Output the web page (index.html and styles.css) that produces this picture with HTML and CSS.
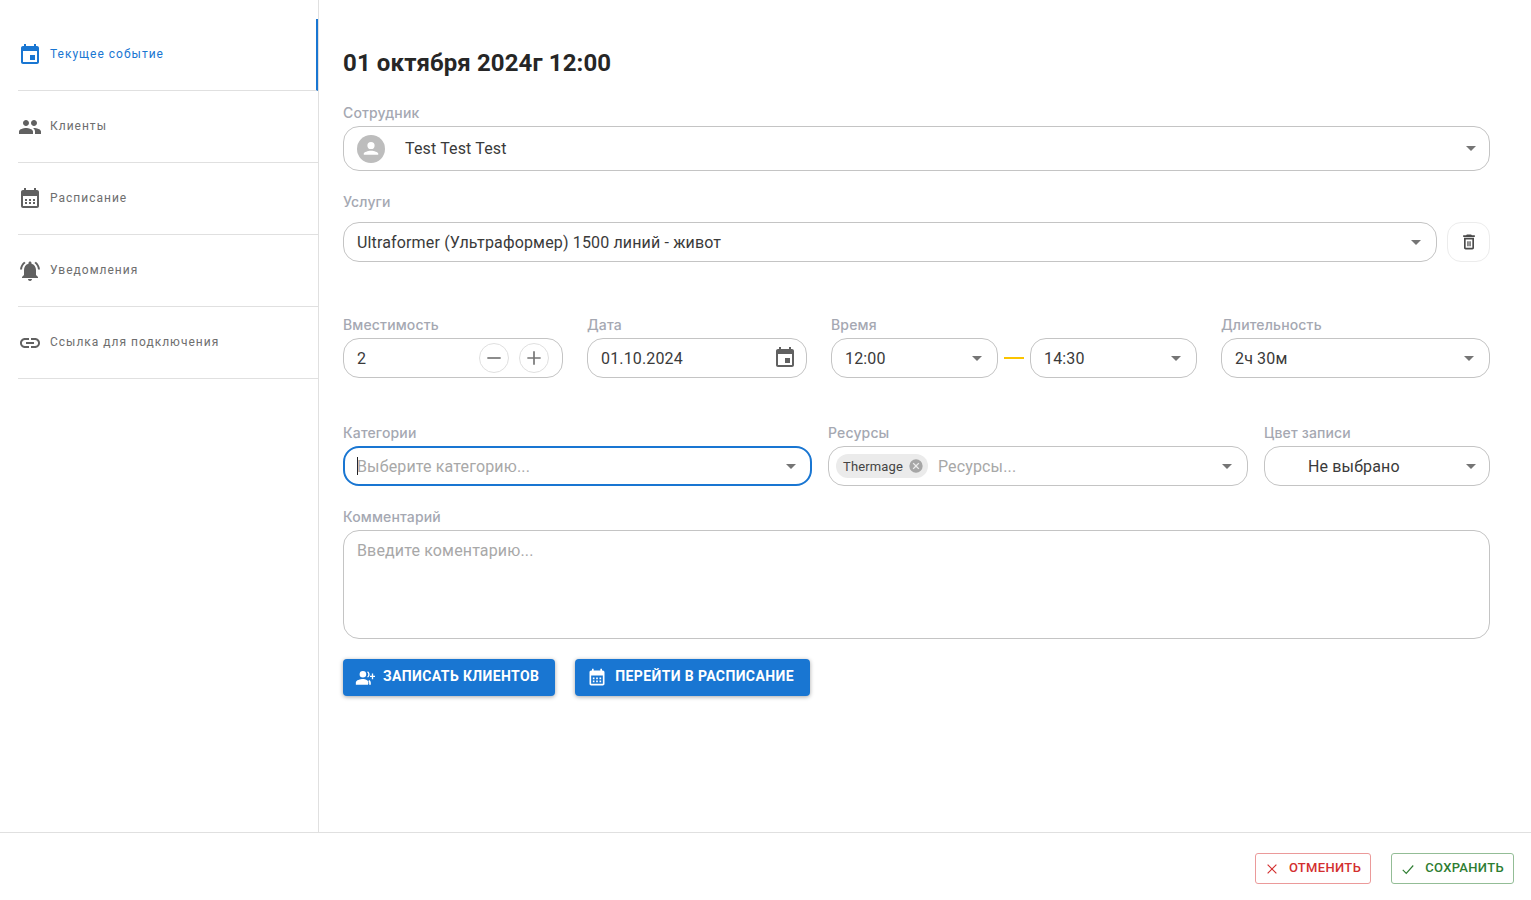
FILE: index.html
```html
<!DOCTYPE html>
<html lang="ru">
<head>
  <meta charset="UTF-8">
  <title>Событие</title>
  <link rel="stylesheet" href="styles.css">
</head>
<body>
  <div class="page">
    <div class="main">
      <nav class="sidebar">
        <a class="nav-item active">
          <svg class="nav-icon" viewBox="0 0 24 24"><path d="M17 12h-5v5h5v-5zM16 1v2H8V1H6v2H5c-1.11 0-1.99.9-1.99 2L3 19c0 1.1.89 2 2 2h14c1.1 0 2-.9 2-2V5c0-1.1-.9-2-2-2h-1V1h-2zm3 18H5V8h14v11z"/></svg>
          <span>Текущее событие</span>
        </a>
        <a class="nav-item">
          <svg class="nav-icon" viewBox="0 0 24 24"><path d="M16 11c1.66 0 2.99-1.34 2.99-3S17.66 5 16 5c-1.66 0-3 1.34-3 3s1.34 3 3 3zm-8 0c1.66 0 2.99-1.34 2.99-3S9.66 5 8 5C6.34 5 5 6.34 5 8s1.34 3 3 3zm0 2c-2.33 0-7 1.17-7 3.5V19h14v-2.5c0-2.33-4.67-3.5-7-3.5zm8 0c-.29 0-.62.02-.97.05 1.16.84 1.97 1.97 1.97 3.45V19h6v-2.5c0-2.33-4.67-3.5-7-3.5z"/></svg>
          <span>Клиенты</span>
        </a>
        <a class="nav-item">
          <svg class="nav-icon" viewBox="0 0 24 24"><path d="M19 3h-1V1h-2v2H8V1H6v2H5c-1.1 0-2 .9-2 2v14c0 1.1.9 2 2 2h14c1.1 0 2-.9 2-2V5c0-1.1-.9-2-2-2zm0 16H5V9h14v10zM7 12h2v2H7zm4 0h2v2h-2zm4 0h2v2h-2zm-8 3h2v2H7zm4 0h2v2h-2zm4 0h2v2h-2z"/></svg>
          <span>Расписание</span>
        </a>
        <a class="nav-item">
          <svg class="nav-icon" viewBox="0 0 24 24"><path d="M7.58 4.08 6.15 2.65C3.75 4.48 2.17 7.3 2.03 10.5h2c.15-2.65 1.51-4.97 3.55-6.42zm12.39 6.42h2c-.15-3.2-1.73-6.02-4.12-7.85l-1.42 1.43c2.02 1.45 3.39 3.77 3.54 6.42zM18 11c0-3.07-1.64-5.64-4.5-6.32V4c0-.83-.67-1.5-1.5-1.5s-1.5.67-1.5 1.5v.68C7.63 5.36 6 7.92 6 11v5l-2 2v1h16v-1l-2-2v-5zm-6 11c.14 0 .27-.01.4-.04.65-.14 1.18-.58 1.44-1.18.1-.24.15-.5.15-.78h-4c.01 1.1.9 2 2.01 2z"/></svg>
          <span>Уведомления</span>
        </a>
        <a class="nav-item">
          <svg class="nav-icon" viewBox="0 0 24 24"><path d="M3.9 12c0-1.71 1.39-3.1 3.1-3.1h4V7H7c-2.76 0-5 2.24-5 5s2.24 5 5 5h4v-1.9H7c-1.71 0-3.1-1.39-3.1-3.1zM8 13h8v-2H8v2zm9-6h-4v1.9h4c1.71 0 3.1 1.39 3.1 3.1s-1.39 3.1-3.1 3.1h-4V17h4c2.76 0 5-2.24 5-5s-2.24-5-5-5z"/></svg>
          <span>Ссылка для подключения</span>
        </a>
      </nav>

      <section class="content">
        <h1 class="title">01 октября 2024г 12:00</h1>

        <div class="field field-employee">
          <label class="label">Сотрудник</label>
          <div class="control control-tall">
            <span class="avatar">
              <svg viewBox="0 0 24 24"><path d="M12 5.9a3.1 3.1 0 1 1 0 6.2 3.1 3.1 0 0 1 0-6.2zM12 13.5c2.7 0 6 1.3 6.2 2.3v1.2H5.8v-1.2c.2-1 3.5-2.3 6.2-2.3z"/></svg>
            </span>
            <span class="value">Test Test Test</span>
            <i class="caret"></i>
          </div>
        </div>

        <div class="field field-services">
          <label class="label">Услуги</label>
          <div class="service-row">
            <div class="control">
              <span class="value">Ultraformer (Ультраформер) 1500 линий - живот</span>
              <i class="caret"></i>
            </div>
            <button class="trash">
              <svg viewBox="0 0 24 24"><path d="M6 19c0 1.1.9 2 2 2h8c1.1 0 2-.9 2-2V7H6v12zM8 9h8v10H8V9zm7.5-5-1-1h-5l-1 1H5v2h14V4h-3.5zM10 11h1.5v6H10zm2.5 0H14v6h-1.5z"/></svg>
            </button>
          </div>
        </div>

        <div class="row-main">
          <div class="field">
            <label class="label">Вместимость</label>
            <div class="control">
              <span class="value">2</span>
              <button class="round"><svg viewBox="0 0 24 24"><path d="M4 11h16v2H4z"/></svg></button>
              <button class="round"><svg viewBox="0 0 24 24"><path d="M11 4h2v7h7v2h-7v7h-2v-7H4v-2h7z"/></svg></button>
            </div>
          </div>
          <div class="field">
            <label class="label">Дата</label>
            <div class="control">
              <span class="value">01.10.2024</span>
              <svg class="date-icon" viewBox="0 0 24 24"><path d="M17 12h-5v5h5v-5zM16 1v2H8V1H6v2H5c-1.11 0-1.99.9-1.99 2L3 19c0 1.1.89 2 2 2h14c1.1 0 2-.9 2-2V5c0-1.1-.9-2-2-2h-1V1h-2zm3 18H5V8h14v11z"/></svg>
            </div>
          </div>
          <div class="field">
            <label class="label">Время</label>
            <div class="time-range">
              <div class="control">
                <span class="value">12:00</span>
                <i class="caret"></i>
              </div>
              <span class="dash"></span>
              <div class="control">
                <span class="value">14:30</span>
                <i class="caret"></i>
              </div>
            </div>
          </div>
          <div class="field">
            <label class="label">Длительность</label>
            <div class="control">
              <span class="value">2ч 30м</span>
              <i class="caret"></i>
            </div>
          </div>
        </div>

        <div class="row-extra">
          <div class="field">
            <label class="label">Категории</label>
            <div class="control focused">
              <span class="cursor"></span>
              <span class="value placeholder">Выберите категорию...</span>
              <i class="caret"></i>
            </div>
          </div>
          <div class="field">
            <label class="label">Ресурсы</label>
            <div class="control control-chips">
              <span class="chip">
                Thermage
                <svg viewBox="0 0 24 24"><path d="M12 2a10 10 0 1 0 0 20 10 10 0 0 0 0-20zm5 13.6L15.6 17 12 13.4 8.4 17 7 15.6l3.6-3.6L7 8.400 8.400 7l3.600 3.600L15.600 7 17 8.400 13.400 12z"/></svg>
              </span>
              <span class="value placeholder">Ресурсы...</span>
              <i class="caret"></i>
            </div>
          </div>
          <div class="field">
            <label class="label">Цвет записи</label>
            <div class="control control-color">
              <span class="value color-value">Не выбрано</span>
              <i class="caret"></i>
            </div>
          </div>
        </div>

        <div class="field field-comment">
          <label class="label">Комментарий</label>
          <div class="textarea">Введите коментарию...</div>
        </div>

        <div class="actions">
          <button class="btn">
            <svg viewBox="0 0 24 24"><path d="M9.500 11.500a4 4 0 1 0 0-8 4 4 0 0 0 0 8zM9.500 13.300c-3 0-8.500 1.400-8.500 4.200V20h14.500l.5-1v-1.500c0-2.800-3.500-4.200-6.500-4.200zM20.200 6.500h1.600v2.700h2.200v1.600h-2.200v2.700h-1.600v-2.700H18V9.200h2.200zM15.500 4c1.300 1.100 2 2.300 2 3.800s-.7 2.700-2 3.700l-.9-1.100c.9-.7 1.300-1.600 1.300-2.600s-.4-1.900-1.300-2.700zM17 14.500c1.300.8 2 2 2 3.500v2h-2v-2c0-.8-.4-1.500-1-2z"/></svg>
            <span class="btn-text">Записать клиентов</span>
          </button>
          <button class="btn">
            <svg viewBox="0 0 24 24"><path d="M19 3h-1V1h-2v2H8V1H6v2H5c-1.100 0-2 .9-2 2v14c0 1.100.9 2 2 2h14c1.100 0 2-.9 2-2V5c0-1.100-.9-2-2-2zm0 16H5V9h14v10zM7 11.500h2v2H7zm4 0h2v2h-2zm4 0h2v2h-2zm-8 3.500h2v2H7zm4 0h2v2h-2zm4 0h2v2h-2z"/></svg>
            <span class="btn-text">Перейти в расписание</span>
          </button>
        </div>
      </section>
    </div>

    <footer class="footer">
      <button class="foot-btn cancel">
        <svg viewBox="0 0 24 24"><path d="M4.500 4.500l15 15M19.500 4.500l-15 15"/></svg>
        Отменить
      </button>
      <button class="foot-btn save">
        <svg viewBox="0 0 24 24"><path d="M3 13.500l6 6L21 6"/></svg>
        Сохранить
      </button>
    </footer>
  </div>
</body>
</html>
```

FILE: styles.css
```css
* {
  box-sizing: border-box;
}

body {
  margin: 0;
  font-family: Roboto, "Liberation Sans", sans-serif;
  color: #333;
  background-color: #fff;
}

.page {
  height: 900px;
  display: flex;
  flex-direction: column;
  overflow: hidden;
}

.main {
  height: 832px;
  display: flex;
}

/* sidebar */
.sidebar {
  width: 319px;
  padding: 19px 0 0 18px;
  border-right: 1px solid #e0e0e0;
}

.nav-item {
  height: 72px;
  display: flex;
  align-items: center;
  gap: 8px;
  padding-bottom: 2px;
  border-bottom: 1px solid #e0e0e0;
  font-size: 12px;
  letter-spacing: 1px;
  color: #6e6e6e;
}

.nav-icon {
  width: 24px;
  height: 24px;
  margin-top: 2px;
  fill: #616161;
}

.nav-item.active {
  color: #1976d2;
  border-right: 2px solid #1976d2;
}

.nav-item.active .nav-icon {
  fill: #1976d2;
}

/* form */
.content {
  flex: 1;
  padding: 0 41px 0 24px;
}

.title {
  margin: 48px 0 0;
  font-size: 24px;
  line-height: 30px;
  font-weight: 700;
  letter-spacing: 0.12px;
  color: #262626;
}

.field {
  min-width: 0;
}

.label {
  display: block;
  height: 16px;
  margin-bottom: 5px;
  font-family: Inter, Roboto, sans-serif;
  font-size: 14px;
  line-height: 16px;
  font-weight: 500;
  letter-spacing: 0.15px;
  color: #a5a8b2;
}

.field-employee {
  margin-top: 27px;
}

.field-services {
  margin-top: 23px;
}

.field-services .label {
  margin-bottom: 12px;
}

.control {
  position: relative;
  flex: 1;
  height: 40px;
  display: flex;
  align-items: center;
  padding: 0 13px;
  border: 1px solid #c4c4c4;
  border-radius: 16px;
  background-color: #fff;
}

.control-tall {
  height: 45px;
}

.control-tall .caret,
.control-color .caret {
  margin-right: 0;
}

.value {
  flex: 1;
  font-size: 16px;
  letter-spacing: 0.15px;
  color: #3a3a3a;
  white-space: nowrap;
}

.value.placeholder {
  color: #a8a8a8;
}

.caret {
  width: 0;
  height: 0;
  margin-right: 2px;
  border-left: 5px solid transparent;
  border-right: 5px solid transparent;
  border-top: 5px solid #757575;
}

.avatar {
  width: 28px;
  height: 28px;
  margin-right: 20px;
  border-radius: 50%;
  background-color: #bdbdbd;
}

.avatar svg {
  display: block;
  width: 28px;
  height: 28px;
  fill: #fff;
}

.service-row {
  display: flex;
  gap: 10px;
}

.trash {
  width: 43px;
  height: 40px;
  padding: 0;
  display: flex;
  align-items: center;
  justify-content: center;
  border: 1px solid #ececec;
  border-radius: 14px;
  background-color: #fff;
}

.trash svg {
  width: 20px;
  height: 20px;
  fill: #4a4a4a;
}

.row-main {
  display: grid;
  grid-template-columns: 220px 220px 366px 1fr;
  gap: 24px;
  margin-top: 55px;
}

.round {
  width: 30px;
  height: 30px;
  margin-left: 10px;
  padding: 0;
  display: flex;
  align-items: center;
  justify-content: center;
  border: 1px solid #e0e0e0;
  border-radius: 50%;
  background-color: #fff;
}

.round svg {
  width: 20px;
  height: 20px;
  fill: #757575;
}

.date-icon {
  width: 24px;
  height: 24px;
  margin-right: -4px;
  fill: #616161;
}

.time-range {
  display: flex;
  align-items: center;
}

.dash {
  width: 20px;
  height: 2px;
  margin: 0 6px;
  background-color: #fbc400;
}

.row-extra {
  display: grid;
  grid-template-columns: 469px 420px 1fr;
  gap: 16px;
  margin-top: 47px;
}

.focused {
  border: 2px solid #1976d2;
  padding: 0 12px 0 12px;
}

.cursor {
  width: 1px;
  height: 18px;
  margin-right: -1px;
  background-color: #222;
}

.control-chips {
  padding-left: 7px;
}

.chip {
  height: 24px;
  display: flex;
  align-items: center;
  gap: 5px;
  margin-right: 10px;
  padding: 0 4px 0 7px;
  border-radius: 12px;
  background-color: #ebebeb;
  font-size: 13px;
  letter-spacing: 0.13px;
  color: #444;
}

.chip svg {
  width: 16px;
  height: 16px;
  fill: #a6a6a6;
}

.color-value {
  padding-left: 30px;
}

.field-comment {
  margin-top: 23px;
}

.textarea {
  height: 109px;
  padding: 11px 13px;
  border: 1px solid #c4c4c4;
  border-radius: 16px;
  font-size: 16px;
  line-height: 18px;
  letter-spacing: 0.15px;
  color: #a8a8a8;
}

.actions {
  display: flex;
  gap: 20px;
  margin-top: 20px;
}

.btn {
  height: 37px;
  display: flex;
  align-items: center;
  gap: 8px;
  padding: 0 16px 0 12px;
  border: 0;
  border-radius: 4px;
  background-color: #1976d2;
  box-shadow: 0 1px 4px rgba(0, 0, 0, 0.35);
  font-family: inherit;
  font-size: 14px;
  font-weight: 700;
  letter-spacing: 0.38px;
  text-transform: uppercase;
  color: #fff;
}

.btn svg {
  width: 20px;
  height: 20px;
  fill: #fff;
}

.btn-text {
  margin-bottom: 4px;
}

/* footer */
.footer {
  height: 68px;
  display: flex;
  justify-content: flex-end;
  gap: 20px;
  padding: 20px 17px 0 0;
  border-top: 1px solid #e0e0e0;
}

.foot-btn {
  height: 31px;
  display: flex;
  align-items: center;
  gap: 10px;
  padding: 0 9px 2px;
  border: 1px solid;
  border-radius: 3px;
  background-color: #fff;
  font-family: inherit;
  font-size: 13px;
  font-weight: 500;
  letter-spacing: 0.33px;
  text-transform: uppercase;
}

.foot-btn svg {
  width: 14px;
  height: 14px;
  margin-top: 3px;
  fill: none;
  stroke: currentColor;
  stroke-width: 2;
}

.cancel {
  color: #d32f2f;
  border-color: #eb9a9a;
}

.save {
  color: #2e7d32;
  border-color: #93bd96;
}
```
